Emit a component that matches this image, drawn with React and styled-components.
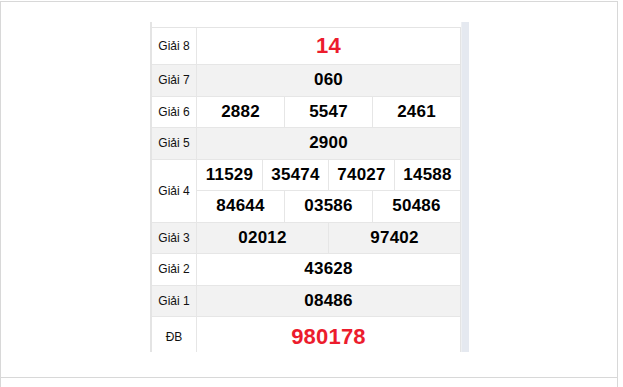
import React from 'react'
import styled, { createGlobalStyle } from 'styled-components'

const GlobalStyle = createGlobalStyle`
  html, body {
    margin: 0;
    padding: 0;
    background: #fff;
    overflow: hidden;
  }
  body {
    font-family: "Liberation Sans", Arial, sans-serif;
  }
`

const Frame = styled.div`
  margin-top: 1px;
  width: 616px;
  height: 385px;
  border: 1px solid #d8d8d8;
  border-bottom: none;
`

const Section = styled.div`
  height: 376px;
  border-bottom: 1px solid #d8d8d8;
  padding-top: 20px;
  box-sizing: border-box;
  display: flex;
  justify-content: center;
`

const ScrollBox = styled.div`
  display: flex;
  width: 319px;
  height: 330px;
  margin-left: 1px;
`

const Viewport = styled.div`
  flex: 1;
  overflow: hidden;
  border-left: 2px solid #e4e4e4;
  padding-top: 5px;
`

const Track = styled.div`
  width: 7px;
  background: #e5e9f0;
  border-left: 1px solid #eef0f3;
`

const Table = styled.div`
  border-top: 1px solid #e4e4e4;
  border-right: 1px solid #e4e4e4;
`

const Row = styled.div`
  display: flex;
  height: ${p => p.$h}px;
  border-bottom: 1px solid #e6e6e6;
  background: ${p => (p.$alt ? '#f2f2f2' : '#fff')};
`

const Label = styled.div`
  width: 44px;
  flex-shrink: 0;
  border-right: 1px solid #e6e6e6;
  display: flex;
  align-items: center;
  justify-content: center;
  font-size: 12px;
  color: #111;
`

const Values = styled.div`
  flex: 1;
  display: flex;
  flex-direction: column;
`

const Line = styled.div`
  flex: 1;
  display: flex;
  & + & {
    border-top: 1px solid #e6e6e6;
  }
`

const Num = styled.div`
  flex: 1;
  display: flex;
  align-items: center;
  justify-content: center;
  font-weight: bold;
  font-size: ${p => (p.$big ? 22 : 17)}px;
  color: ${p => (p.$red ? '#ec1c2d' : '#000')};
  letter-spacing: 0.2px;
  & + & {
    border-left: 1px solid #e6e6e6;
  }
`

const prizes = [
  { name: 'Giải 8', lines: [['14']], red: true, h: 36 },
  { name: 'Giải 7', lines: [['060']], h: 30.5 },
  { name: 'Giải 6', lines: [['2882', '5547', '2461']], h: 30.5 },
  { name: 'Giải 5', lines: [['2900']], h: 30.5 },
  { name: 'Giải 4', lines: [['11529', '35474', '74027', '14588'], ['84644', '03586', '50486']], h: 62 },
  { name: 'Giải 3', lines: [['02012', '97402']], h: 30.5 },
  { name: 'Giải 2', lines: [['43628']], h: 30.5 },
  { name: 'Giải 1', lines: [['08486']], h: 30.5 },
  { name: 'ĐB', lines: [['980178']], red: true, h: 40 },
]

export default function App() {
  return (
    <>
      <GlobalStyle />
      <Frame>
        <Section>
          <ScrollBox>
            <Viewport>
              <Table>
                {prizes.map((p, i) => (
                  <Row key={p.name} $h={p.h} $alt={i % 2 === 1}>
                    <Label>{p.name}</Label>
                    <Values>
                      {p.lines.map((line, j) => (
                        <Line key={j}>
                          {line.map(n => (
                            <Num key={n} $big={p.red} $red={p.red}>{n}</Num>
                          ))}
                        </Line>
                      ))}
                    </Values>
                  </Row>
                ))}
              </Table>
            </Viewport>
            <Track />
          </ScrollBox>
        </Section>
      </Frame>
    </>
  )
}
